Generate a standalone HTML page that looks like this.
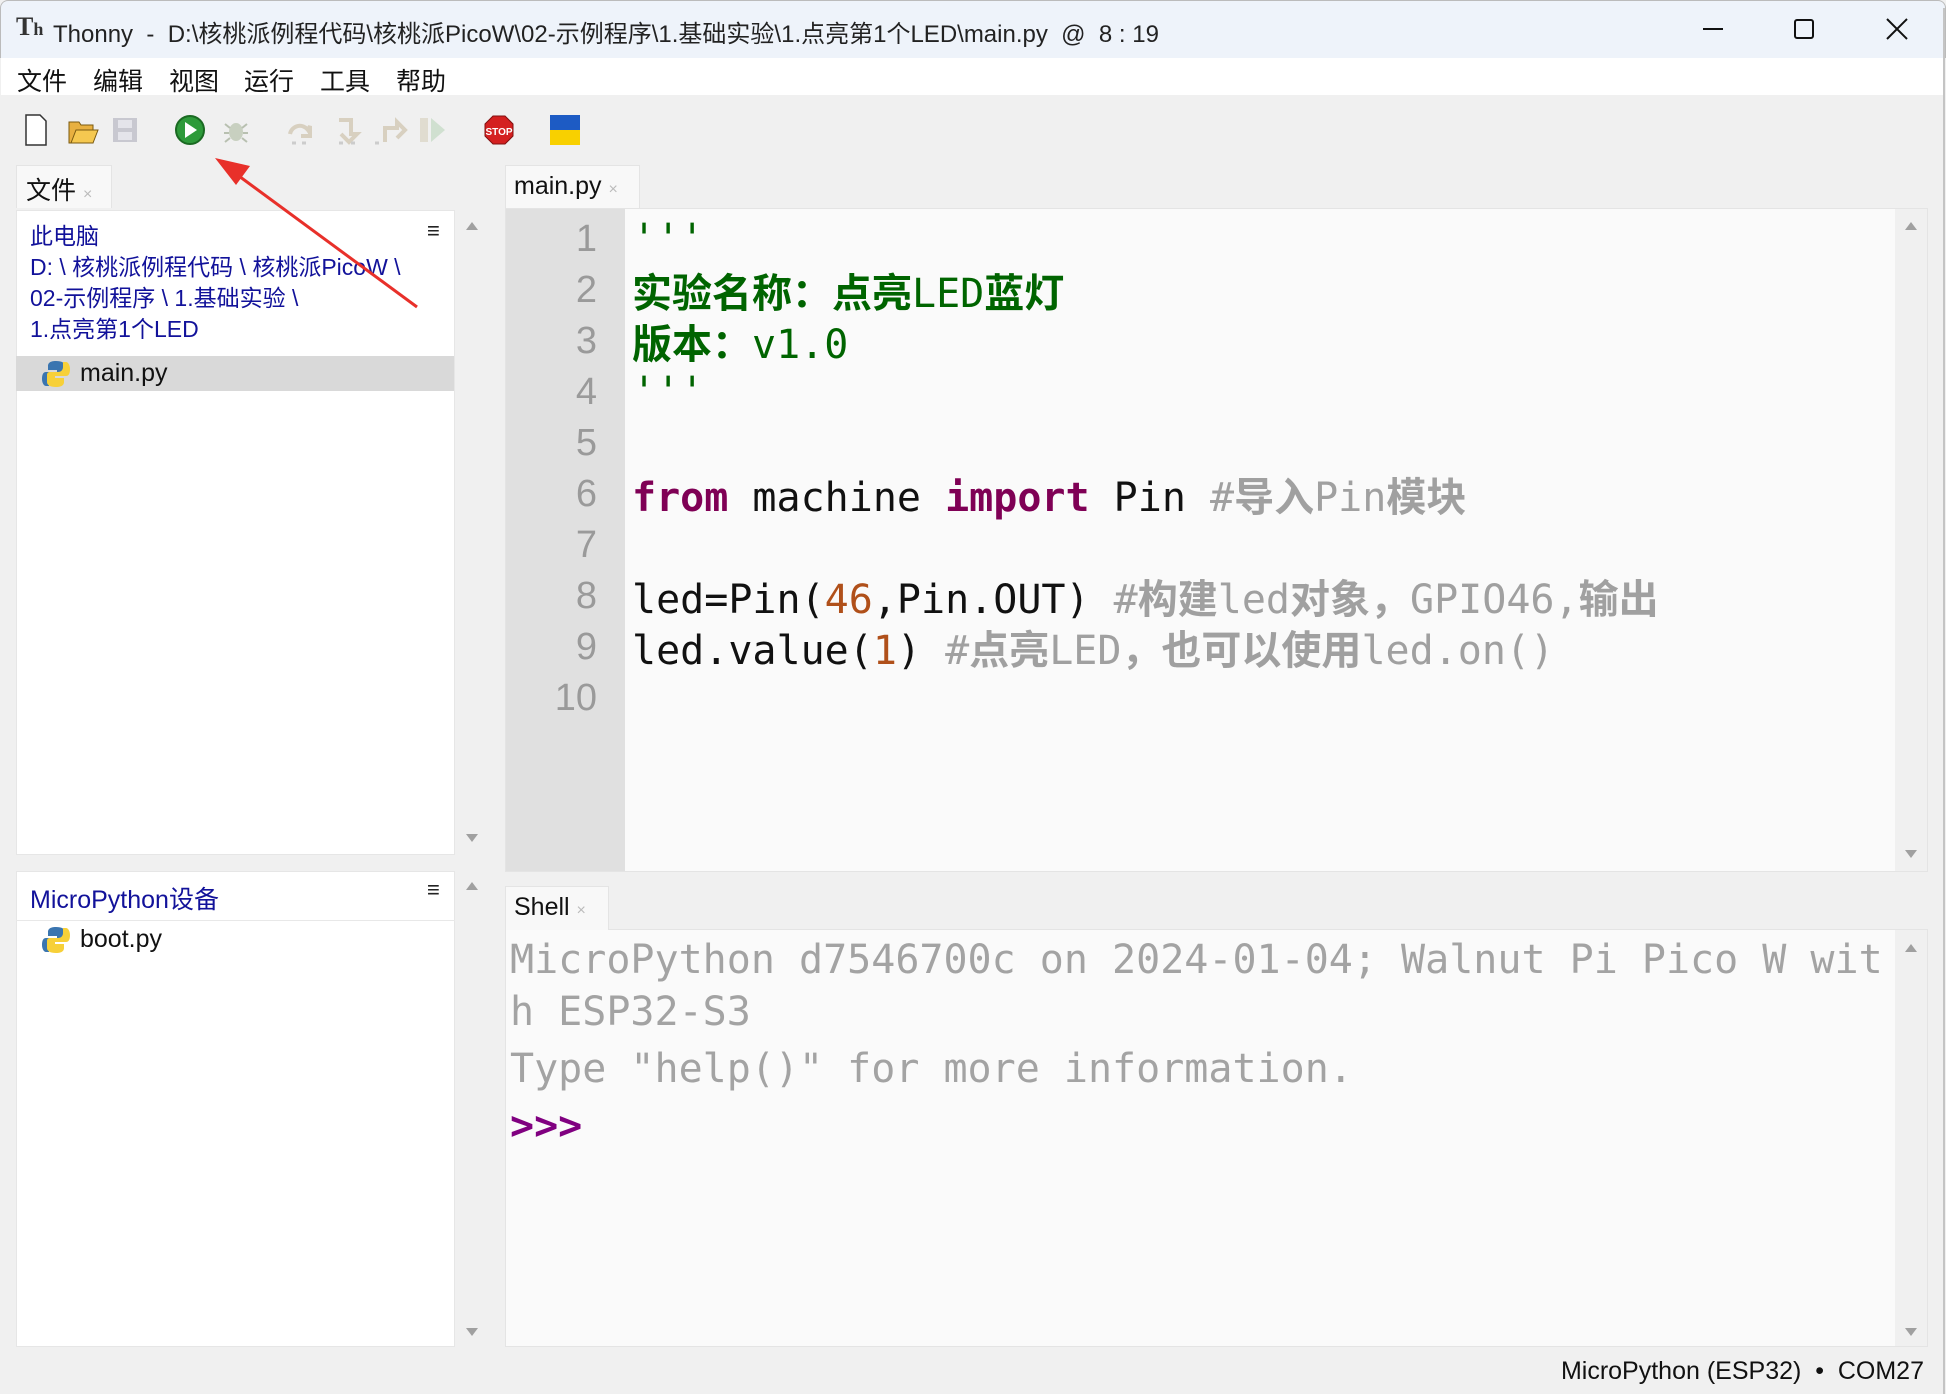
<!DOCTYPE html>
<html><head><meta charset="utf-8"><style>
*{margin:0;padding:0;box-sizing:border-box}
body{width:1946px;height:1394px;background:#f0f0f0;position:relative;overflow:hidden;font-family:"Liberation Sans","Noto Sans CJK SC",sans-serif}
.a{position:absolute;white-space:pre}
.mono{font-family:"DejaVu Sans Mono","Liberation Mono","Noto Sans CJK SC",monospace}
.cjk{font-family:"Noto Sans CJK SC",sans-serif;font-weight:bold}
.ln{position:absolute;right:0;width:110px;text-align:right;color:#9a9a9a;font-size:38px;font-family:"Liberation Sans",sans-serif}
.code{position:absolute;left:632px;font-size:40px;line-height:51px;height:51px;white-space:pre}
.sh{position:absolute;left:510px;font-size:40px;color:#a3a3a3;white-space:pre}
.ua,.da{position:absolute;width:0;height:0;border-left:6px solid transparent;border-right:6px solid transparent}
.ua{border-bottom:8px solid #a0a0a0}.da{border-top:8px solid #a0a0a0}
</style></head><body>
<!-- title bar -->
<div class="a" style="left:0;top:0;width:1946px;height:58px;background:#eef3fa;border:1px solid #bbb;border-bottom:none;border-radius:8px 8px 0 0"></div>
<div class="a" style="left:16px;top:12px;font-size:26px;font-weight:bold;color:#333;font-family:'Liberation Serif',serif">T<span style="font-size:18px">h</span></div>
<div class="a" style="left:53px;top:14px;font-size:24px;color:#222">Thonny  -  D:\核桃派例程代码\核桃派PicoW\02-示例程序\1.基础实验\1.点亮第1个LED\main.py  @  8 : 19</div>
<div class="a" style="left:1703px;top:28px;width:20px;height:2px;background:#111"></div>
<div class="a" style="left:1794px;top:19px;width:20px;height:20px;border:2px solid #111;border-radius:3px"></div>
<svg class="a" style="left:1886px;top:18px" width="22" height="22"><path d="M1 1L21 21M21 1L1 21" stroke="#111" stroke-width="2"/></svg>
<!-- menu -->
<div class="a" style="left:1px;top:58px;width:1943px;height:37px;background:#fff"></div>
<div class="a" style="left:17px;top:62px;font-size:25px;color:#111">文件</div>
<div class="a" style="left:93px;top:62px;font-size:25px;color:#111">编辑</div>
<div class="a" style="left:169px;top:62px;font-size:25px;color:#111">视图</div>
<div class="a" style="left:244px;top:62px;font-size:25px;color:#111">运行</div>
<div class="a" style="left:320px;top:62px;font-size:25px;color:#111">工具</div>
<div class="a" style="left:396px;top:62px;font-size:25px;color:#111">帮助</div>
<!-- toolbar -->
<svg class="a" style="left:20px;top:112px" width="580" height="36">
<path d="M6 3h14l6 6v24H6z" fill="#fff" stroke="#333" stroke-width="1.5"/>
<path d="M49 10h10l2 3h12v18H49z" fill="#e8b040" stroke="#7a5a10"/><path d="M51 31l5-13h22l-5 13z" fill="#f5c850" stroke="#7a5a10"/>
<rect x="93" y="6" width="24" height="24" fill="#c8c8d0"/><rect x="98" y="8" width="14" height="8" fill="#e4e4ea"/><rect x="98" y="20" width="14" height="8" fill="#e4e4ea"/>
<g transform="translate(37,0)"><circle cx="133" cy="18" r="14" fill="#2e9a3a" stroke="#1a6a22" stroke-width="2"/><path d="M128 10v16l12-8z" fill="#fff"/></g>
<g transform="translate(45,0)"><ellipse cx="171" cy="20" rx="7" ry="9" fill="#c8d0c0"/><path d="M160 12l5 4M182 12l-5 4M159 21h5M183 21h-5M160 30l5-4M182 30l-5-4" stroke="#b8c0b0" stroke-width="2"/></g>
<g transform="translate(58,0)"><path d="M212 22a10 10 0 0 1 18-4l2-4v10h-9" fill="none" stroke="#d8d0c0" stroke-width="4"/><path d="M214 31h4M224 31h4" stroke="#ccc" stroke-width="3"/></g>
<g transform="translate(69,0)"><path d="M250 8h12v14h6l-8 8-8-8" fill="none" stroke="#d8d0c0" stroke-width="4"/><path d="M250 31h4M262 31h4" stroke="#ccc" stroke-width="3"/></g>
<g transform="translate(67,0)"><path d="M298 30v-14h12v-6l8 8-8 8" fill="none" stroke="#d8d0c0" stroke-width="4"/><path d="M288 31h4" stroke="#ccc" stroke-width="3"/></g>
<g transform="translate(80,0)"><rect x="320" y="6" width="8" height="24" fill="#e0dcd0"/><path d="M331 6l14 12-14 12z" fill="#d0e0d0"/></g>
<g transform="translate(100,0)"><path d="M373 4h12l8 8v12l-8 8h-12l-8-8V12z" fill="#d42020" stroke="#801010"/>
<text x="379" y="23" font-size="10" font-weight="bold" fill="#fff" text-anchor="middle" font-family="Liberation Sans">STOP</text></g>
<rect x="530" y="3" width="30" height="15" fill="#1d5bc4"/><rect x="530" y="18" width="30" height="15" fill="#f8d000"/>
</svg>
<!-- files tab -->
<div class="a" style="left:16px;top:165px;width:96px;height:43px;background:#f8f8f8;border:1px solid #e4e4e4;border-bottom:none"></div>
<div class="a" style="left:26px;top:171px;font-size:25px;color:#111">文件 <span style="font-size:16px;color:#bbb">×</span></div>
<!-- left upper panel -->
<div class="a" style="left:16px;top:210px;width:439px;height:645px;background:#fff;border:1px solid #e6e6e6"></div>
<div class="a" style="left:30px;top:221px;font-size:23px;line-height:31px;color:#12129a">此电脑
D: \ 核桃派例程代码 \ 核桃派PicoW \
02-示例程序 \ 1.基础实验 \
1.点亮第1个LED</div>
<div class="a" style="left:427px;top:218px;font-size:22px;font-weight:bold;color:#222">≡</div>
<div class="a" style="left:16px;top:356px;width:438px;height:35px;background:#d9d9d9"></div>
<svg class="a" style="left:42px;top:359px" width="28" height="30"><path d="M14 2c-7 0-8 3-8 5v4h9v2H4c-3 0-4 3-4 7s2 7 4 7h3v-5c0-3 2-5 5-5h8c2 0 3-1 3-3V7c0-3-3-5-9-5z" fill="#3a75b0"/><path d="M14 28c7 0 8-3 8-5v-4h-9v-2h11c3 0 4-3 4-7s-2-7-4-7h-3v5c0 3-2 5-5 5H8c-2 0-3 1-3 3v7c0 3 3 5 9 5z" fill="#f7d038"/></svg>
<div class="a" style="left:80px;top:359px;font-size:25px;color:#111">main.py</div>
<div class="a" style="left:455px;top:210px;width:33px;height:645px;background:#f0f0f0"></div>
<div class="ua" style="left:466px;top:222px"></div><div class="da" style="left:466px;top:834px"></div>
<!-- left lower panel -->
<div class="a" style="left:16px;top:871px;width:439px;height:476px;background:#fff;border:1px solid #e6e6e6"></div>
<div class="a" style="left:16px;top:920px;width:439px;height:1px;background:#e8e8e8"></div>
<div class="a" style="left:30px;top:880px;font-size:25px;color:#12129a">MicroPython设备</div>
<div class="a" style="left:427px;top:877px;font-size:22px;font-weight:bold;color:#222">≡</div>
<svg class="a" style="left:42px;top:925px" width="28" height="30"><path d="M14 2c-7 0-8 3-8 5v4h9v2H4c-3 0-4 3-4 7s2 7 4 7h3v-5c0-3 2-5 5-5h8c2 0 3-1 3-3V7c0-3-3-5-9-5z" fill="#3a75b0"/><path d="M14 28c7 0 8-3 8-5v-4h-9v-2h11c3 0 4-3 4-7s-2-7-4-7h-3v5c0 3-2 5-5 5H8c-2 0-3 1-3 3v7c0 3 3 5 9 5z" fill="#f7d038"/></svg>
<div class="a" style="left:80px;top:925px;font-size:25px;color:#111">boot.py</div>
<div class="da" style="left:466px;top:1328px"></div><div class="ua" style="left:466px;top:882px"></div>
<!-- editor tab -->
<div class="a" style="left:505px;top:165px;width:135px;height:44px;background:#f8f8f8;border:1px solid #e4e4e4;border-bottom:none"></div>
<div class="a" style="left:514px;top:172px;font-size:25px;color:#111">main.py <span style="font-size:16px;color:#bbb">×</span></div>
<!-- editor -->
<div class="a" style="left:505px;top:208px;width:1423px;height:664px;background:#fafafa;border:1px solid #e4e4e4"></div>
<div class="a" style="left:506px;top:209px;width:119px;height:662px;background:#e0e0e0"></div>
<div class="a" style="left:1895px;top:209px;width:32px;height:662px;background:#f0f0f0"></div>
<div class="ua" style="left:1905px;top:222px"></div><div class="da" style="left:1905px;top:850px"></div>
<div class="a" style="left:487px;top:218px;width:110px">
<div class="ln" style="top:0">1</div><div class="ln" style="top:51px">2</div><div class="ln" style="top:102px">3</div><div class="ln" style="top:153px">4</div><div class="ln" style="top:204px">5</div><div class="ln" style="top:255px">6</div><div class="ln" style="top:306px">7</div><div class="ln" style="top:357px">8</div><div class="ln" style="top:408px">9</div><div class="ln" style="top:459px">10</div>
</div>
<div class="mono" style="position:absolute;left:0;top:0;width:1946px;height:1394px">
<div class="code" style="top:214px;color:#006400">'''</div>
<div class="code" style="top:265px;color:#006400"><span class="cjk">实验名称：点亮</span>LED<span class="cjk">蓝灯</span></div>
<div class="code" style="top:316px;color:#006400"><span class="cjk">版本：</span>v1.0</div>
<div class="code" style="top:367px;color:#006400">'''</div>
<div class="code" style="top:469px;color:#111"><b style="color:#7f0055">from</b> machine <b style="color:#7f0055">import</b> Pin <span style="color:#a0a0a0">#<span class="cjk">导入</span>Pin<span class="cjk">模块</span></span></div>
<div class="code" style="top:571px;color:#111">led=Pin(<span style="color:#b0501a">46</span>,Pin.OUT) <span style="color:#a0a0a0">#<span class="cjk">构建</span>led<span class="cjk">对象，</span>GPIO46,<span class="cjk">输出</span></span></div>
<div class="code" style="top:622px;color:#111">led.value(<span style="color:#b0501a">1</span>) <span style="color:#a0a0a0">#<span class="cjk">点亮</span>LED<span class="cjk">，也可以使用</span>led.on()</span></div>
<!-- shell -->
<div class="sh" style="top:937px">MicroPython d7546700c on 2024-01-04; Walnut Pi Pico W wit</div>
<div class="sh" style="top:989px">h ESP32-S3</div>
<div class="sh" style="top:1046px">Type "help()" for more information.</div>
<div class="sh" style="top:1103px;color:#800080;font-weight:bold">&gt;&gt;&gt;</div>
</div>
<!-- shell tab -->
<div class="a" style="left:505px;top:886px;width:104px;height:44px;background:#f8f8f8;border:1px solid #e4e4e4;border-bottom:none"></div>
<div class="a" style="left:514px;top:893px;font-size:25px;color:#111">Shell <span style="font-size:16px;color:#bbb">×</span></div>
<div class="a" style="left:505px;top:929px;width:1423px;height:418px;background:#fafafa;border:1px solid #e4e4e4;z-index:-1"></div>
<div class="a" style="left:1895px;top:930px;width:32px;height:416px;background:#f0f0f0"></div>
<div class="ua" style="left:1905px;top:944px"></div><div class="da" style="left:1905px;top:1328px"></div>
<!-- status -->
<div class="a" style="right:22px;top:1357px;font-size:25px;color:#111">MicroPython (ESP32)  •  COM27</div>
<div class="a" style="left:1943px;top:8px;width:2px;height:1386px;background:#c4c4c4"></div>
<!-- red arrow -->
<svg class="a" style="left:0;top:0" width="500" height="330"><line x1="417" y1="307" x2="228" y2="168" stroke="#e8302a" stroke-width="3"/><path d="M215 158l35 8-14 19z" fill="#e8302a"/></svg>
</body></html>
